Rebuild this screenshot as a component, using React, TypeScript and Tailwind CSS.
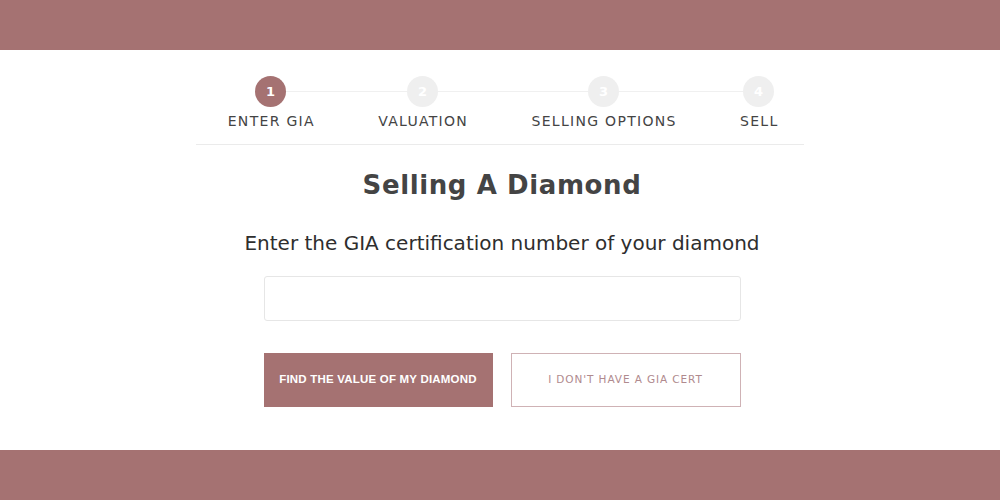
const steps = [
  { n: 1, label: "ENTER GIA", active: true },
  { n: 2, label: "VALUATION", active: false },
  { n: 3, label: "SELLING OPTIONS", active: false },
  { n: 4, label: "SELL", active: false },
]

export default function App() {
  return (
    <div className="w-[1000px] h-[500px] flex flex-col bg-white text-[#333]" style={{ fontFamily: '"DejaVu Sans", "Noto Sans", sans-serif' }}>
      <div className="h-[50px] bg-[#a57272]" />

      <div className="flex-1 flex flex-col items-center">
        {/* stepper */}
        <div className="w-[608px] border-b border-[#ebebeb] pt-[26px] pb-[14px] flex justify-center">
          <div className="relative ml-[5px] flex gap-[62px]">
            <div className="absolute left-[42px] right-[19px] top-[15px] h-px bg-[#f0f0f0]" />
            {steps.map((s) => (
              <div key={s.n} className="relative flex flex-col items-center">
                <div
                  className={
                    s.active
                      ? "w-[31px] h-[31px] rounded-full bg-[#a57272] text-white text-[13px] font-bold flex items-center justify-center"
                      : "w-[31px] h-[31px] rounded-full bg-[#efefef] text-white text-[13px] font-bold flex items-center justify-center"
                  }
                >
                  {s.n}
                </div>
                <div className="mt-[5px] pl-[1.3px] text-[14px] leading-[18px] tracking-[1.3px] text-[#444]">{s.label}</div>
              </div>
            ))}
          </div>
        </div>

        <h1 className="mt-[24px] ml-[4px] text-[26px] leading-[32px] font-bold tracking-[0.6px] text-[#444]">Selling A Diamond</h1>

        <p className="mt-[29px] ml-[4px] text-[20px] leading-[26px] text-[#2e2e2e]">Enter the GIA certification number of your diamond</p>

        <input className="mt-[20px] ml-[4px] w-[477px] h-[45px] border border-[#e6e6e6] rounded-[3px] outline-none px-3" />

        <div className="mt-[32px] ml-[4px] flex gap-[18px]">
          <button
            className="w-[229px] h-[54px] bg-[#a57272] text-white text-[11.5px] font-bold tracking-[0.2px]"
            style={{ fontFamily: '"Liberation Sans", Arial, sans-serif' }}
          >
            FIND THE VALUE OF MY DIAMOND
          </button>
          <button className="w-[230px] h-[54px] border border-[#cfb2b5] text-[#b08a8e] text-[10.5px] tracking-[0.9px]">
            I DON'T HAVE A GIA CERT
          </button>
        </div>
      </div>

      <div className="h-[50px] bg-[#a57272]" />
    </div>
  )
}
